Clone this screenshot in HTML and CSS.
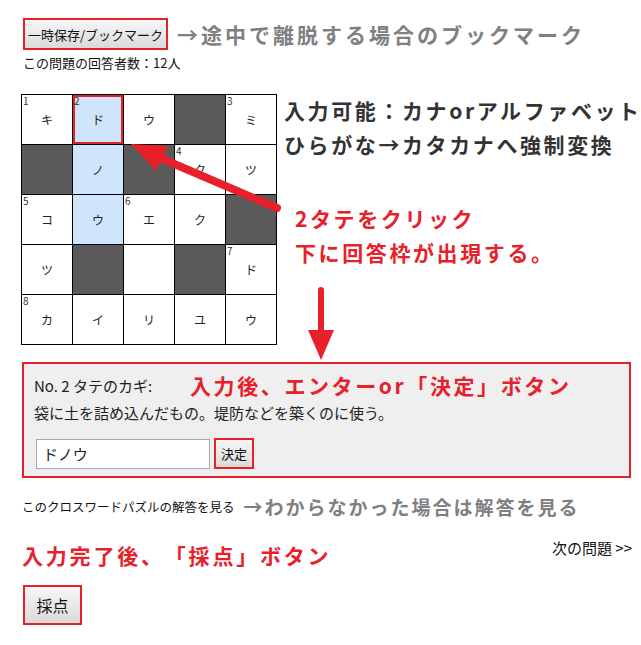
FILE: index.html
```html
<!DOCTYPE html>
<html lang="ja">
<head>
<meta charset="utf-8">
<title>クロスワード</title>
<link rel="stylesheet" href="styles.css">
</head>
<body>
<div class="page">
  <div class="top-row">
    <button class="btn btn-save">一時保存/ブックマーク</button>
    <span class="note-gray">→途中で離脱する場合のブックマーク</span>
  </div>
  <p class="count">この問題の回答者数：12人</p>

  <div class="puzzle">
    <table class="grid">
      <tr>
        <td><span class="num">1</span>キ</td>
        <td class="hl sel"><span class="num">2</span>ド</td>
        <td>ウ</td>
        <td class="blk"></td>
        <td><span class="num">3</span>ミ</td>
      </tr>
      <tr>
        <td class="blk"></td>
        <td class="hl">ノ</td>
        <td class="blk"></td>
        <td><span class="num">4</span>ク</td>
        <td>ツ</td>
      </tr>
      <tr>
        <td><span class="num">5</span>コ</td>
        <td class="hl">ウ</td>
        <td><span class="num">6</span>エ</td>
        <td>ク</td>
        <td class="blk"></td>
      </tr>
      <tr>
        <td>ツ</td>
        <td class="blk"></td>
        <td></td>
        <td class="blk"></td>
        <td><span class="num">7</span>ド</td>
      </tr>
      <tr>
        <td><span class="num">8</span>カ</td>
        <td>イ</td>
        <td>リ</td>
        <td>ユ</td>
        <td>ウ</td>
      </tr>
    </table>
    <div class="hints">
      <p class="note-dark">入力可能：カナorアルファベット<br>ひらがな→カタカナへ強制変換</p>
      <p class="note-red indent">2タテをクリック<br>下に回答枠が出現する。</p>
    </div>
  </div>

  <div class="panel">
    <div class="panel-head">
      <span class="clue-label">No. 2 タテのカギ:</span>
      <span class="note-red">入力後、エンターor「決定」ボタン</span>
    </div>
    <p class="clue-text">袋に土を詰め込んだもの。堤防などを築くのに使う。</p>
    <div class="answer-form">
      <input class="answer-input" type="text" value="ドノウ">
      <button class="btn btn-decide">決定</button>
    </div>
  </div>

  <div class="answer-row">
    <span class="answer-link">このクロスワードパズルの解答を見る</span>
    <span class="note-gray small">→わからなかった場合は解答を見る</span>
  </div>

  <div class="score-row">
    <span class="note-red">入力完了後、「採点」ボタン</span>
    <span class="next-link">次の問題 &gt;&gt;</span>
  </div>
  <button class="btn btn-score">採点</button>
</div>

<svg class="arrows" width="641" height="645" viewBox="0 0 641 645">
  <line x1="277" y1="208" x2="158" y2="157" stroke="#e8202a" stroke-width="8" stroke-linecap="round"/>
  <polygon points="131,144 156,171 168,146" fill="#e8202a"/>
  <line x1="321" y1="290" x2="321" y2="334" stroke="#e8202a" stroke-width="6" stroke-linecap="round"/>
  <polygon points="308,330 334,330 321,360" fill="#e8202a"/>
</svg>
</body>
</html>
```
FILE: styles.css
```css
* { box-sizing: border-box; }
html, body {
  margin: 0;
  padding: 0;
  background: #fff;
}
body {
  font-family: "Noto Sans CJK JP", "Noto Sans", sans-serif;
  color: #222;
  position: relative;
  width: 641px;
  height: 645px;
  overflow: hidden;
  text-spacing-trim: space-all;
}
p { margin: 0; }

.page {
  width: 610px;
  margin-left: 22px;
  padding-top: 18px;
}

.top-row {
  display: flex;
  align-items: center;
  height: 32px;
}

.btn {
  font-family: "Noto Sans CJK JP", sans-serif;
  color: #111;
  border: 2px solid #e8202a;
  background: linear-gradient(#f7f7f7, #dadada);
  padding: 0;
  margin: 0;
}
.btn-save {
  width: 145px;
  height: 32px;
  font-size: 13px;
  margin-left: 1px;
}

.note-gray {
  color: #808080;
  font-weight: 700;
  font-size: 21px;
  letter-spacing: 3px;
  margin-left: 9px;
  white-space: nowrap;
}
.note-gray.small {
  font-size: 19px;
  letter-spacing: 2px;
  margin-left: 9px;
}
.note-dark {
  color: #333;
  font-weight: 700;
  font-size: 21px;
  letter-spacing: 2.6px;
  line-height: 34px;
  white-space: nowrap;
}
.note-red {
  color: #e8202a;
  font-weight: 700;
  font-size: 21px;
  letter-spacing: 2.6px;
  line-height: 34px;
  white-space: nowrap;
}

.count {
  font-size: 13px;
  line-height: 16px;
  margin-top: 5px;
  margin-left: 1px;
  color: #111;
}

.puzzle {
  display: flex;
  align-items: flex-start;
  margin-top: 23px;
  margin-left: -1px;
}

.grid {
  border-collapse: collapse;
  flex: none;
}
.grid td {
  position: relative;
  width: 51px;
  height: 50px;
  border: 1px solid #000;
  padding: 0;
  text-align: center;
  vertical-align: middle;
  font-size: 12px;
  color: #222;
  background: #fff;
}
.grid td.blk { background: #5a5a5a; }
.grid td.hl { background: #cfe5fb; }
.grid td.sel { box-shadow: inset 0 0 0 2px #e8202a; }
.num {
  position: absolute;
  top: 1px;
  left: 1px;
  font-size: 10px;
  line-height: 10px;
  color: #333;
}

.hints {
  margin-left: 7px;
  margin-top: -1px;
}
.hints .indent {
  margin-top: 40px;
  margin-left: 11px;
}

.panel {
  margin-top: 17px;
  width: 609px;
  border: 2px solid #e8202a;
  background: #efefef;
  padding: 6px 10px 7px 10px;
}
.panel-head {
  display: flex;
  align-items: center;
  height: 30px;
}
.clue-label {
  width: 156px;
  font-size: 15px;
  color: #222;
}
.clue-text {
  margin-top: 2px;
  font-size: 15px;
  line-height: 22px;
  color: #222;
}
.answer-form {
  display: flex;
  align-items: center;
  margin-top: 14px;
  margin-left: 2px;
}
.answer-input {
  width: 174px;
  height: 30px;
  border: 1px solid #a9a9a9;
  background: #fff;
  font-family: "Noto Sans CJK JP", sans-serif;
  font-size: 15px;
  padding: 0 6px;
  color: #222;
}
.btn-decide {
  width: 40px;
  height: 31px;
  font-size: 13px;
  margin-left: 4px;
}

.answer-row {
  display: flex;
  align-items: center;
  height: 28px;
  margin-top: 14px;
}
.answer-link {
  font-size: 12.5px;
  color: #111;
}

.score-row {
  display: flex;
  justify-content: space-between;
  align-items: flex-start;
  margin-top: 20px;
}
.score-row .note-red { line-height: 30px; letter-spacing: 2.8px; }
.next-link {
  font-size: 15px;
  line-height: 16px;
  color: #111;
}

.btn-score {
  display: block;
  margin-top: 15px;
  margin-left: 1px;
  width: 59px;
  height: 40px;
  font-size: 16px;
}

.arrows {
  position: absolute;
  left: 0;
  top: 0;
  pointer-events: none;
}
```
